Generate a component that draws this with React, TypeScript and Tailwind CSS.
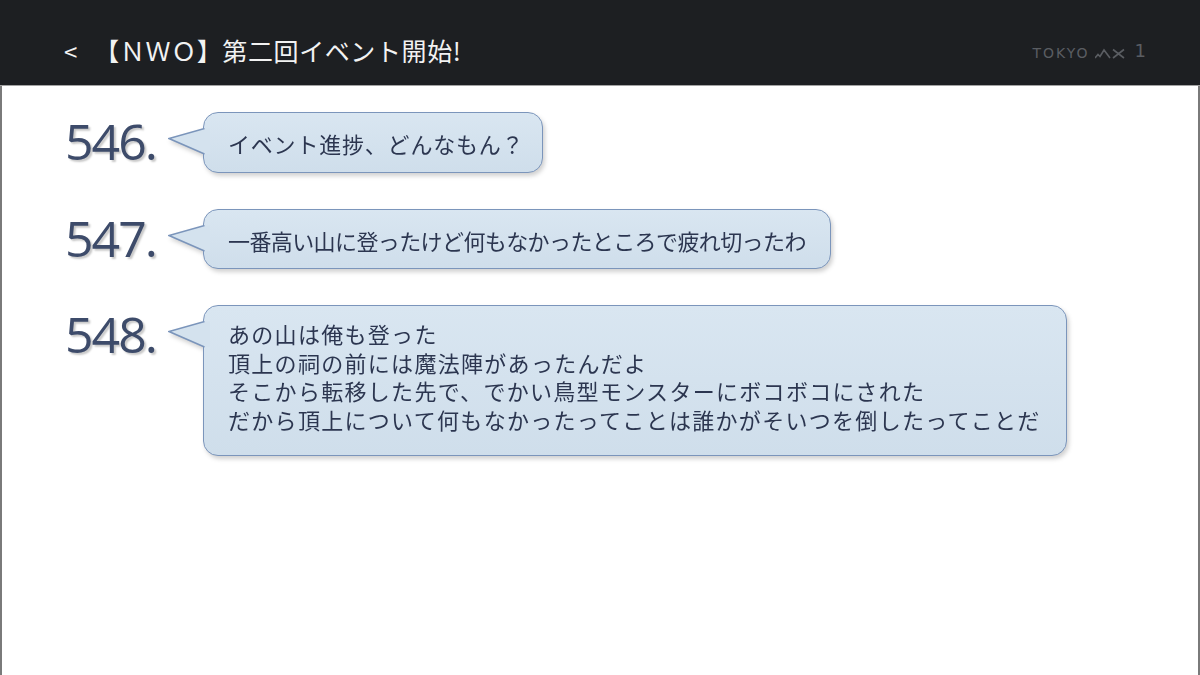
import React from "react";

const posts = [
  {
    no: "546.",
    lines: ["イベント進捗、どんなもん？"],
    box: "w-[340px] h-[61px] pt-[16px]",
    track: "tracking-[0.8px]",
  },
  {
    no: "547.",
    lines: ["一番高い山に登ったけど何もなかったところで疲れ切ったわ"],
    box: "w-[628px] h-[60px] pt-[16px]",
    track: "tracking-[-0.6px]",
  },
  {
    no: "548.",
    lines: [
      "あの山は俺も登った",
      "頂上の祠の前には魔法陣があったんだよ",
      "そこから転移した先で、でかい鳥型モンスターにボコボコにされた",
      "だから頂上について何もなかったってことは誰かがそいつを倒したってことだ",
    ],
    box: "w-[864px] h-[151px] pt-[13px]",
    track: "tracking-[1.3px]",
  },
];

const Tail = () => (
  <svg className="absolute left-[-36px] top-[15px]" width="42" height="28" viewBox="0 0 42 28">
    <polygon points="42,0.5 36,0.5 1,10.5 36,26 42,26" fill="#d4e2ee" />
    <polyline points="36.5,0.5 1,10.5 36.5,26" fill="none" stroke="#7b95bb" strokeWidth="1.5" />
  </svg>
);

const Bubble = ({ lines, box, track }: { lines: string[]; box: string; track: string }) => (
  <div
    className={`relative rounded-[15px] border-[1.5px] border-[#7b95bb] bg-gradient-to-b from-[#d9e6f1] to-[#cfdeeb] pl-[24px] drop-shadow-[2px_3px_2px_rgba(0,0,0,0.18)] ${box}`}
  >
    <Tail />
    <div className={`text-[22px] leading-[28.5px] text-[#2c3650] whitespace-nowrap ${track}`}>
      {lines.map((l) => (
        <div key={l}>{l}</div>
      ))}
    </div>
  </div>
);

export default function App() {
  return (
    <div
      className="w-[1200px] h-[675px] flex flex-col bg-white overflow-hidden"
      style={{ fontFamily: '"Noto Sans CJK JP", "Noto Sans", sans-serif' }}
    >
      <header className="h-[86px] shrink-0 bg-[#1d1f22] border-b border-[#a3a3a3] flex items-center pt-[17px] pl-[64px] pr-[54px]">
        <span className="text-[24px] text-[#f2f2f2] mr-[17px]">&lt;</span>
        <span className="text-[25px] text-[#f2f2f2] tracking-[0.6px]">【ＮＷＯ】第二回イベント開始!</span>
        <div className="ml-auto flex items-end gap-[5px] text-[#5a5d62]" style={{ fontFamily: '"DejaVu Sans", sans-serif' }}>
          <span className="text-[14px] leading-none tracking-[2px]">TOKYO</span>
          <svg width="32" height="11" viewBox="0 0 32 11" className="mb-[1px]">
            <path d="M0 10 L3 6.5 L5 8.5 L9 2 L15 10 M18 1.5 L29 10 M29 1.5 L18 10" fill="none" stroke="#5a5d62" strokeWidth="1.6" />
          </svg>
          <span className="text-[18px] leading-none ml-[3px]">1</span>
        </div>
      </header>
      <main className="flex-1 border-x-2 border-[#7a7a7a] pt-[26px] pl-[63px] flex flex-col gap-[36px]">
        {posts.map((p) => (
          <div key={p.no} className="flex items-start">
            <span
              className="w-[138px] shrink-0 mt-[4px] text-[50px] leading-none tracking-[-2px] text-[#3d4b6a] text-shadow-[2px_2px_2px_rgba(0,0,0,0.22)]"
              style={{ fontFamily: '"Open Sans", sans-serif' }}
            >
              {p.no}
            </span>
            <Bubble lines={p.lines} box={p.box} track={p.track} />
          </div>
        ))}
      </main>
    </div>
  );
}
